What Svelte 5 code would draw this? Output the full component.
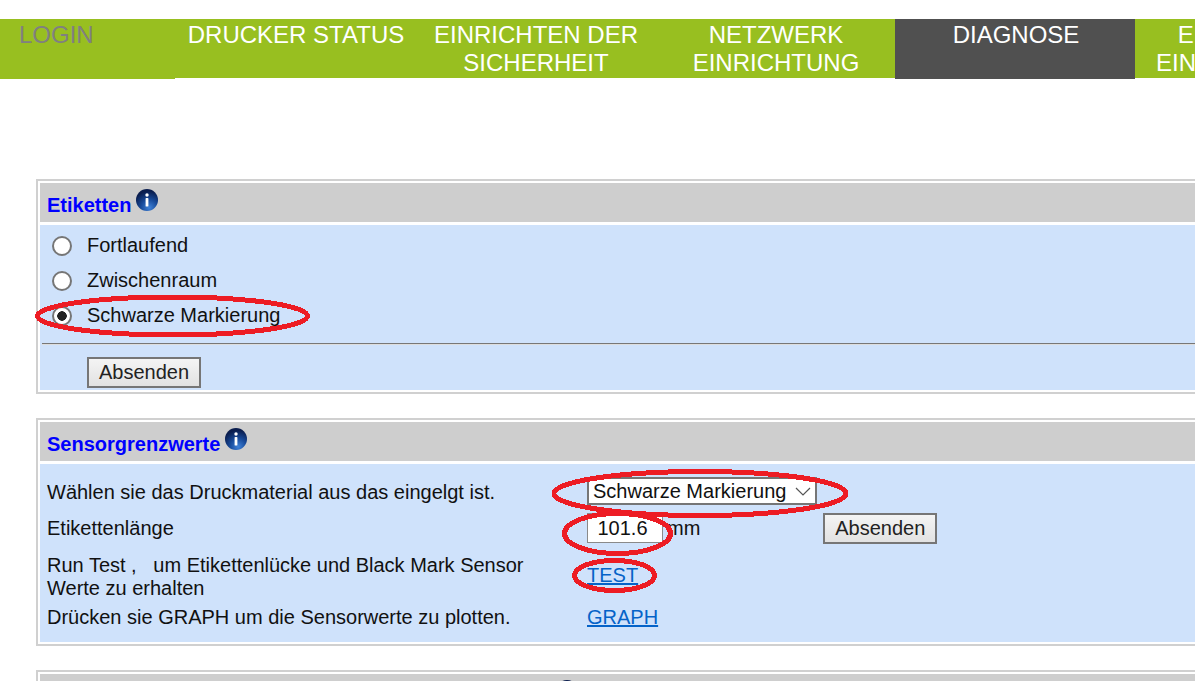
<script>
  const tabs = [
    { label: 'LOGIN', cls: 'login' },
    { label: 'DRUCKER STATUS', cls: '' },
    { label: 'EINRICHTEN DER SICHERHEIT', cls: '' },
    { label: 'NETZWERK EINRICHTUNG', cls: '' },
    { label: 'DIAGNOSE', cls: 'active' },
    { label: 'ERWEITERTE EINSTELLUNGEN', cls: '' }
  ];
  const media = ['Fortlaufend', 'Zwischenraum', 'Schwarze Markierung'];
</script>

<svelte:head>
  <title>Diagnose</title>
</svelte:head>

{#snippet info(id)}
  <svg class="info" width="22" height="22" viewBox="0 0 22 22" aria-hidden="true">
    <defs>
      <radialGradient {id} cx="60%" cy="85%" r="75%">
        <stop offset="0" stop-color="#3f82d8" />
        <stop offset="0.5" stop-color="#174a9a" />
        <stop offset="1" stop-color="#0a1d4e" />
      </radialGradient>
    </defs>
    <circle cx="11" cy="11" r="11" fill="url(#{id})" />
    <circle cx="11" cy="6" r="1.7" fill="#fff" />
    <rect x="9.6" y="9" width="2.8" height="8.6" rx="0.7" fill="#fff" />
  </svg>
{/snippet}

<div class="page">
  <nav class="tabs">
    {#each tabs as tab}
      <a class="tab {tab.cls}" href="#top">{tab.label}</a>
    {/each}
  </nav>

  <main>
    <section class="box">
      <h2>Etiketten {@render info('i1')}</h2>
      <div class="body first">
        {#each media as m, i}
          <label class="radio">
            <input type="radio" name="media" checked={i === 2} />
            <span>{m}</span>
          </label>
        {/each}
        <hr />
        <button class="submit" type="button">Absenden</button>
      </div>
    </section>

    <section class="box">
      <h2>Sensorgrenzwerte {@render info('i2')}</h2>
      <div class="body grid">
        <div class="lbl">Wählen sie das Druckmaterial aus das eingelgt ist.</div>
        <div class="val">
          <div class="select">
            <span>Schwarze Markierung</span>
            <svg width="16" height="9" viewBox="0 0 16 9" aria-hidden="true">
              <path d="M1 1l7 7 7-7" fill="none" stroke="#555" stroke-width="1.2" />
            </svg>
          </div>
        </div>

        <div class="lbl">Etikettenlänge</div>
        <div class="val inline">
          <input class="num" type="text" value="101.6" />
          <span class="unit">mm</span>
          <button class="submit" type="button">Absenden</button>
        </div>

        <div class="lbl">Run Test , &nbsp;&nbsp;um Etikettenlücke und Black Mark Sensor Werte zu erhalten</div>
        <div class="val up"><a href="#top">TEST</a></div>

        <div class="lbl">Drücken sie GRAPH um die Sensorwerte zu plotten.</div>
        <div class="val"><a href="#top">GRAPH</a></div>
      </div>
    </section>

    <section class="box">
      <h2 class="center">{@render info('i3')}</h2>
    </section>
  </main>

  <svg class="marks" width="1195" height="681" aria-hidden="true">
    <g fill="none" stroke="#ed1c24" stroke-width="5" shape-rendering="crispEdges">
      <ellipse cx="172.5" cy="316" rx="135" ry="19" />
      <ellipse cx="700" cy="493.5" rx="146" ry="22" />
      <ellipse cx="617.5" cy="533.5" rx="53" ry="20" />
      <ellipse cx="614.5" cy="575.5" rx="40" ry="15" />
    </g>
  </svg>
</div>

<style>
  :global(body) {
    margin: 0;
    background: #fff;
    font-family: "Liberation Sans", Arial, sans-serif;
    color: #111;
  }

  .page {
    position: relative;
    width: 1195px;
    height: 681px;
    overflow: hidden;
    padding-top: 19px;
    box-sizing: border-box;
  }

  .tabs {
    display: flex;
    align-items: flex-start;
    width: 1500px;
    height: 60px;
    background: linear-gradient(#98bf20 59px, #fff 59px);
  }

  .tab {
    flex: 0 0 240px;
    box-sizing: border-box;
    height: 59px;
    font-size: 24px;
    line-height: 28px;
    padding: 2px 9px 0 11px;
    text-align: center;
    color: #fff;
    text-decoration: none;
  }

  .tab.login {
    flex-basis: 175px;
    height: 60px;
    padding-left: 19px;
    text-align: left;
    color: #808080;
    background: #98bf20;
  }

  .tab.active {
    height: 60px;
    background: #505050;
  }

  main {
    width: 1300px;
    padding: 100px 0 0 36px;
    display: flex;
    flex-direction: column;
    gap: 24px;
  }

  .box {
    border: 2px solid #d0d0d0;
    padding: 2px 0 2px 2px;
  }

  h2 {
    margin: 0;
    box-sizing: border-box;
    height: 39px;
    padding: 11px 0 0 7px;
    display: flex;
    align-items: flex-start;
    gap: 5px;
    background: #cecece;
    color: #00f;
    font-size: 20px;
    line-height: 23px;
    font-weight: bold;
  }

  h2 .info {
    margin-top: -5px;
  }

  h2.center {
    padding-left: 516px;
  }

  .body {
    margin-top: 3px;
    background: #cfe2fb;
    font-size: 20px;
  }

  .first {
    box-sizing: border-box;
    height: 165px;
    padding-top: 3px;
  }

  .radio {
    display: flex;
    align-items: center;
    height: 35px;
    padding-left: 12px;
    gap: 15px;
  }

  input[type="radio"] {
    appearance: none;
    box-sizing: border-box;
    width: 20px;
    height: 20px;
    margin: 0;
    border: 2px solid #767676;
    border-radius: 50%;
    background: #fff;
  }

  input[type="radio"]:checked {
    background: radial-gradient(circle, #222 0 4.5px, #fff 5px);
  }

  hr {
    margin: 10px 0 12px 2px;
    border: 0;
    border-top: 1px solid #777;
    border-bottom: 1px solid #ddd;
  }

  .submit {
    box-sizing: border-box;
    width: 114px;
    height: 31px;
    padding: 0;
    margin-left: 47px;
    border: 2px solid #767676;
    border-radius: 0;
    background: linear-gradient(#f4f4f4, #e2e2e2);
    color: #222;
    font: 20px "Liberation Sans", Arial, sans-serif;
  }

  .grid {
    display: grid;
    grid-template-columns: 540px 1fr;
    grid-template-rows: 36px 36px 61px 20px;
    align-items: center;
    box-sizing: border-box;
    height: 178px;
    padding: 10px 0 0 7px;
  }

  .lbl {
    width: 500px;
    line-height: 23px;
  }

  .val {
    line-height: 23px;
  }

  .val.up {
    margin-bottom: 2px;
  }

  .val.inline {
    display: flex;
    align-items: center;
  }

  .val.inline .submit {
    margin-left: 123px;
  }

  .select {
    box-sizing: border-box;
    width: 230px;
    height: 28px;
    margin-bottom: 2px;
    border: 2px solid #767676;
    background: #fff;
    display: flex;
    align-items: center;
    justify-content: space-between;
    padding: 0 4px;
    font-size: 20px;
  }

  .num {
    box-sizing: border-box;
    width: 76px;
    height: 30px;
    border: 1px solid #8a8a8a;
    background: #fff;
    font: 20px "Liberation Sans", Arial, sans-serif;
    text-align: center;
    padding: 0 5px 0 0;
    color: #111;
  }

  .unit {
    margin-left: 4px;
  }

  .val a {
    color: #0563c8;
    text-decoration-thickness: 2px;
  }

  .marks {
    position: absolute;
    top: 0;
    left: 0;
    pointer-events: none;
  }
</style>
